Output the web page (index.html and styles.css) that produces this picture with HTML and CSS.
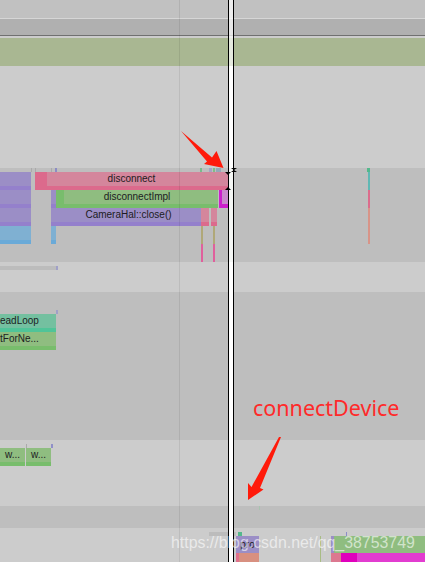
FILE: index.html
```html
<!DOCTYPE html>
<html lang="zh-CN">
<head>
  <meta charset="UTF-8" />
  <meta name="viewport" content="width=device-width, initial-scale=1.0" />
  <title>Trace - connectDevice</title>
  <link rel="stylesheet" href="styles.css">
</head>
<body>
  <main class="visor">
    <div class="faixa topo"></div>
    <div class="faixa regua"></div>
    <div class="faixa fresta"></div>
    <div class="faixa verde"></div>
    <div class="faixa clara h102"></div>

    <!-- camera track -->
    <section class="faixa escura h94">
      <i class="tick t-a"></i><i class="tick t-b"></i><i class="tick t-c"></i><i class="tick t-d"></i>
      <i class="tick t-e"></i><i class="tick t-f"></i><i class="tick t-g"></i><i class="tick t-h"></i>

      <div class="slice roxo col-a l0"></div>
      <div class="slice roxo col-a l1"></div>
      <div class="slice roxo col-a l2"></div>
      <div class="slice azul col-a l3"></div>
      <div class="slice roxo col-b l1"></div>
      <div class="slice roxo col-b l2"></div>
      <div class="slice azul col-b l3"></div>

      <div class="slice rosa s-disconnect l0"><span class="inicio i-rosa"></span><b>disconnect</b></div>
      <div class="slice verde-s s-impl l1"><span class="inicio i-verde"></span><b>disconnectImpl</b></div>
      <div class="slice roxo s-close l2"><b>CameraHal::close()</b></div>
      <div class="slice rosa s-p1 l2"></div>
      <div class="slice rosa s-p2 l2"></div>
      <div class="slice magenta s-mag l1"></div>

      <i class="fio f1 oliva"></i><i class="fio f2 oliva"></i>
      <i class="fio f1 pink"></i><i class="fio f2 pink"></i>

      <i class="fio f3 teal"></i><i class="fio f3 coral"></i><i class="fio f3 salmao"></i><i class="tick t-i"></i>
    </section>

    <section class="faixa clara h30">
      <div class="barrinha"></div>
    </section>

    <section class="faixa escura h148">
      <i class="tick t-j"></i>
      <div class="slice teal-s s-read"><b>eadLoop</b></div>
      <div class="slice verde-s s-wait"><b>tForNe...</b></div>
    </section>

    <section class="faixa clara h66">
      <i class="tick t-k"></i><i class="tick t-l"></i>
      <div class="slice verde-s s-w1"><b>w...</b></div>
      <div class="slice verde-s s-w2"><b>w...</b></div>
    </section>

    <section class="faixa escura h22">
      <i class="tick t-m"></i>
    </section>

    <section class="faixa clara h34">
      <i class="tick t-n"></i><i class="tick t-o"></i>
      <i class="tick t-p"></i>
      <div class="slice roxo s-pro"><b>pro</b></div>
      <div class="baixo b1"></div>
      <div class="baixo b2"></div>
      <i class="fio f4"></i>
      <div class="slice roxo s-q"></div>
      <div class="slice verde-s s-green"></div>
      <div class="baixo b3"></div>
      <div class="baixo b4"></div>
      <div class="baixo b5"></div>
    </section>

    <!-- overlays -->
    <div class="grade"></div>
    <div class="cursor">
      <span class="marca m1"></span>
      <span class="marca m2"></span>
      <span class="marca m3"></span>
      <span class="marca m4"></span>
    </div>
    <svg class="setas" width="425" height="562" viewBox="0 0 425 562">
      <polygon points="181,131 212,157.5 216.5,151 223.5,168 204,164 207,161.5" fill="#ff1a0a" />
      <polygon points="281,437 260,488 263.5,489.5 248,500 248,483 251.5,487 279,437" fill="#ff1a0a" />
    </svg>
    <p class="nota">connectDevice</p>
    <p class="marca-agua">https://blog.csdn.net/qq_38753749</p>
  </main>
</body>
</html>
```

FILE: styles.css
```css
:root {
  --clara: #cccccc;
  --escura: #bebebe;
  --roxo: #9b8ec6;
  --roxo-forte: #9480cc;
  --azul: #7fb0d2;
  --azul-forte: #6aaad8;
  --rosa: #d4869c;
  --rosa-forte: #dc6a8c;
  --verde: #8fbd80;
  --verde-forte: #78bd6c;
}

* {
  margin: 0;
  padding: 0;
  box-sizing: border-box;
}

body {
  background: var(--clara);
  overflow: hidden;
}

.visor {
  position: relative;
  width: 425px;
  height: 562px;
  overflow: hidden;
  display: flex;
  flex-direction: column;
  font-family: "Liberation Sans", Arial, sans-serif;
}

.faixa {
  position: relative;
  flex: none;
  overflow: hidden;
}

.topo {
  height: 19px;
  background: #c1c1c1;
  border-bottom: 1px solid #d6d6d6;
}

.regua {
  height: 17px;
  background: #b0b0b0;
  border-bottom: 1px solid #707070;
}

.fresta {
  height: 2px;
  background: #cccccc;
}

.verde {
  height: 28px;
  background: #a9b792;
}

.clara { background: var(--clara); }
.escura { background: var(--escura); }
.h102 { height: 102px; }
.h94 { height: 94px; }
.h30 { height: 30px; }
.h148 { height: 148px; }
.h66 { height: 66px; }
.h22 { height: 22px; }
.h34 { height: 34px; }

/* slices */
.slice {
  position: absolute;
  height: 18px;
  border-bottom: 4px solid transparent;
  font-size: 10px;
  line-height: 14px;
  text-align: center;
  color: #1c1c22;
  white-space: nowrap;
}

.slice b {
  position: relative;
  font-weight: normal;
}

.roxo { background: var(--roxo); border-bottom-color: var(--roxo-forte); }
.azul { background: var(--azul); border-bottom-color: var(--azul-forte); }
.rosa { background: var(--rosa); border-bottom-color: var(--rosa-forte); }
.verde-s { background: var(--verde); border-bottom-color: var(--verde-forte); }
.teal-s { background: #74c0a0; border-bottom-color: #50c498; }
.magenta { background: #c888cc; border-bottom-color: #cc20cc; border-left: 3px solid #cc20cc; }

.inicio {
  position: absolute;
  left: 0;
  top: 0;
  height: 14px;
}

.i-rosa { width: 12px; background: var(--rosa-forte); }
.i-verde { width: 8px; background: var(--verde-forte); }

.l0 { top: 4px; }
.l1 { top: 22px; }
.l2 { top: 40px; }
.l3 { top: 58px; }

.col-a { left: 0; width: 31px; }
.col-b { left: 51px; width: 5px; }

.s-disconnect { left: 35px; width: 193px; }
.s-impl { left: 56px; width: 162px; }
.s-close { left: 51px; width: 150px; padding-left: 5px; }
.s-p1 { left: 201px; width: 8px; }
.s-p2 { left: 211px; width: 6px; }
.s-mag { left: 219px; width: 9px; }

.s-read { left: 0; width: 56px; top: 22px; text-align: left; }
.s-wait { left: 0; width: 56px; top: 40px; text-align: left; }

.s-w1 { left: 0; width: 25px; top: 8px; }
.s-w2 { left: 26px; width: 25px; top: 8px; }

.s-pro { left: 236px; width: 23px; top: 8px; height: 17px; border-bottom: 0; line-height: 17px; overflow: hidden; }
.s-q { left: 331px; width: 3px; top: 8px; height: 17px; border-bottom: 0; }
.s-green { left: 334px; width: 91px; top: 8px; height: 17px; border-bottom: 0; }

.baixo {
  position: absolute;
  top: 25px;
  height: 9px;
}

.b1 { left: 236px; width: 3px; background: #e0708c; }
.b2 { left: 239px; width: 20px; background: #d89080; }
.b3 { left: 331px; width: 10px; background: #dc7890; }
.b4 { left: 341px; width: 16px; background: #e000bc; }
.b5 { left: 357px; width: 68px; background: #e23cd0; }

/* ticks */
.tick {
  position: absolute;
  top: 0;
  height: 4px;
  width: 2px;
  background: #a8a8c8;
}

.t-a { left: 31px; background: #aaa; width: 1px; }
.t-b { left: 35px; background: #aaa; width: 1px; }
.t-c { left: 51px; background: #aaa; width: 1px; }
.t-d { left: 55px; background: #8c8cc4; }
.t-e { left: 200px; background: #78bc8c; }
.t-f { left: 209px; width: 3px; background: #a4a4c4; }
.t-g { left: 213px; background: #80bc88; }
.t-h { left: 216px; width: 5px; background: #94a8b8; }
.t-i { left: 367px; width: 3px; background: #54b88c; }
.t-j { left: 56px; top: 18px; background: #a0a0c8; }
.t-k { left: 26px; top: 4px; width: 1px; background: #aaa; }
.t-l { left: 51px; top: 4px; background: #9090c8; }
.t-m { left: 259px; width: 1px; background: #a8c4b0; }
.t-n { left: 209px; top: 4px; width: 27px; background: #bcbcbc; }
.t-o { left: 238px; top: 4px; width: 4px; background: #54b88c; }
.t-p { left: 346px; top: 4px; width: 1px; background: #8c8cc8; }

.barrinha {
  position: absolute;
  left: 0;
  top: 4px;
  width: 58px;
  height: 4px;
  background: linear-gradient(to right, #bcbcbc 56px, #a0a0c8 56px);
}

.fio {
  position: absolute;
  width: 2px;
}

.f1 { left: 201px; }
.f2 { left: 213px; }
.f3 { left: 368px; width: 2px; }
.f4 { left: 320px; top: 8px; width: 1px; height: 26px; background: #a8bc84; }

.oliva { top: 58px; height: 18px; background: #b0a878; }
.pink { top: 76px; height: 18px; background: #e0609c; }
.teal { top: 4px; height: 18px; background: #60b8b4; }
.coral { top: 22px; height: 18px; background: #dc6c8c; }
.salmao { top: 40px; height: 36px; background: #d89488; }

/* overlays */
.grade {
  position: absolute;
  top: 0;
  left: 179px;
  width: 1px;
  height: 562px;
  background: rgba(0, 0, 0, 0.08);
}

.cursor {
  position: absolute;
  top: 0;
  left: 228px;
  width: 6px;
  height: 562px;
  border-left: 1px solid #000;
  border-right: 1px solid #000;
  background: linear-gradient(to bottom,
    rgba(255, 255, 255, 0.7) 0, rgba(255, 255, 255, 0.7) 66px,
    #fff 66px, #fff 168px,
    #f4f6f4 168px, #f4f6f4 262px,
    #fff 262px);
}

.marca {
  position: absolute;
  width: 0;
  height: 0;
  border-left: 3px solid transparent;
  border-right: 3px solid transparent;
}

.m1 { left: -4px; top: 172px; border-top: 3px solid #000; }
.m2 { left: -4px; top: 187px; border-bottom: 3px solid #000; }
.m3 { left: 2px; top: 168px; border-top: 2px solid #000; }
.m4 { left: 2px; top: 170px; border-bottom: 2px solid #000; }

.setas {
  position: absolute;
  top: 0;
  left: 0;
}

.nota {
  position: absolute;
  left: 253px;
  top: 393px;
  font-family: "Noto Sans", sans-serif;
  font-size: 21.5px;
  line-height: 30px;
  color: #ff2a2a;
}

.marca-agua {
  position: absolute;
  left: 171px;
  top: 534px;
  font-size: 15.9px;
  line-height: 18px;
  color: rgba(255, 255, 255, 0.6);
  white-space: nowrap;
}
```
